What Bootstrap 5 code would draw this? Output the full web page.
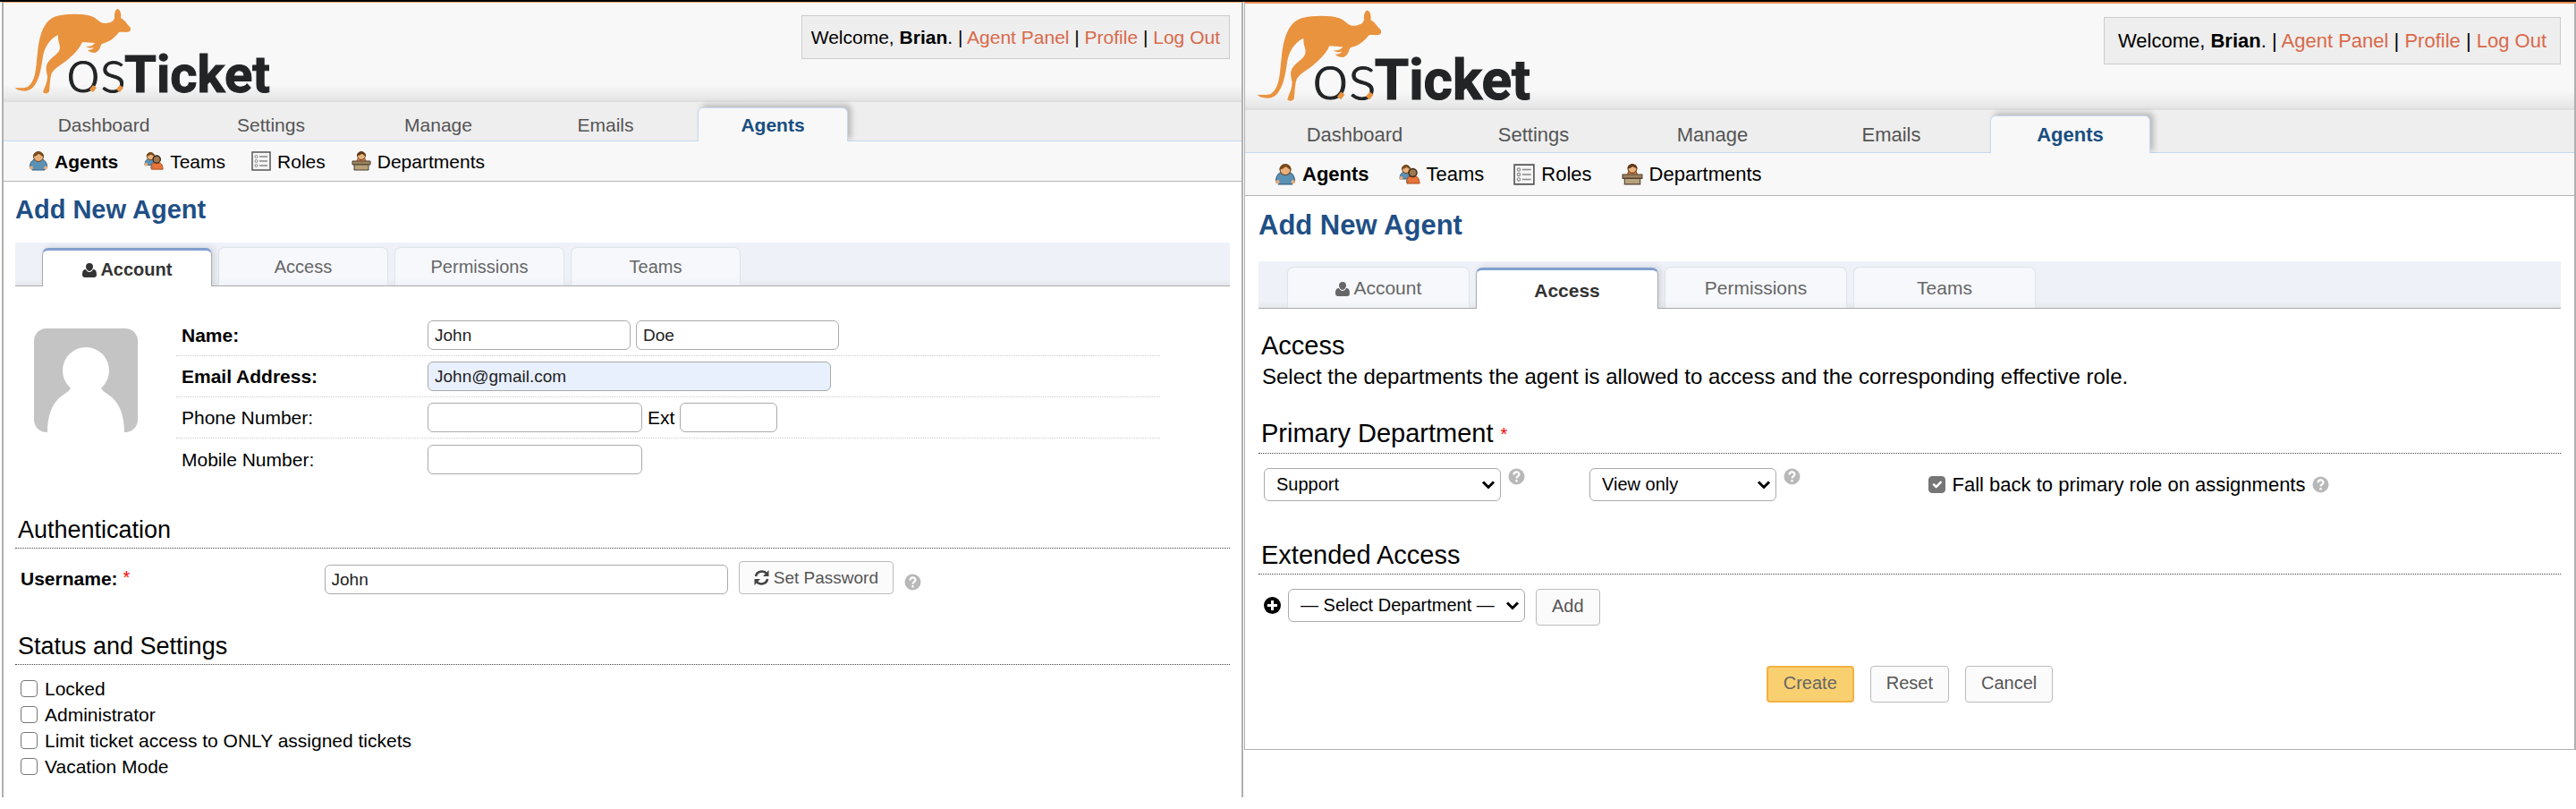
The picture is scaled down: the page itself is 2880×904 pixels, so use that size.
<!DOCTYPE html>
<html lang="en">
<head>
<meta charset="utf-8">
<meta name="viewport" content="width=device-width, initial-scale=1">
<title>osTicket :: Add New Agent</title>
<link rel="stylesheet" href="https://cdn.jsdelivr.net/npm/bootstrap@5.3.0/dist/css/bootstrap.min.css">
<script src="https://cdn.jsdelivr.net/npm/bootstrap@5.3.0/dist/js/bootstrap.bundle.min.js"></script>
<style>
  body { font-family: "Liberation Sans", Arial, sans-serif; color: #000; background: #fff; border-top: 2px solid #000; }
  a { text-decoration: none; }
  .panes { display: grid; grid-template-columns: 1390fr 1490fr; align-items: start; }

  .pane-box {
    --text: 21px; --title: 29px; --section: 27px; --tab: 20px; --ctl: 19px;
    --tabs-h: 49px; --tab-h: 43px; --tab-w: 190px; --icon: 22px;
    font-size: var(--text); line-height: 29px; border: 1px solid #b0b0b0; border-top-color: #f0a878;
  }
  .pane-first { margin-left: 2px; border-width: 1px 2px 0 2px; padding-bottom: 20px; }
  .pane-second {
    --text: 22px; --title: 31px; --section: 29px; --tab: 21px; --ctl: 20px;
    --tabs-h: 53px; --tab-h: 46px; --tab-w: 204px; --icon: 24px;
    margin-left: 1px; border-top: 2px solid #ea8a58; border-right-width: 2px; padding-bottom: 52px;
  }

  .brand-bar { height: 111px; padding: 0 13px 0 12px; background: linear-gradient(#f8f8f8 82%, #e8e8e8 96%, #dcdcdc); }
  .pane-second .brand-bar { height: 119px; padding: 0 15px 0 13px; }
  .brand-logo { height: 111px; width: 298px; display: block; }
  .pane-second .brand-logo { height: 119px; width: 319px; }
  .user-box { margin-top: 14px; height: 49px; padding: 0 10px; border: 1px solid #ccc; background: #eee; white-space: nowrap; }
  .pane-second .user-box { margin-top: 15px; height: 53px; padding: 0 15px; }
  .user-box a { color: #d9694a; }

  .main-nav { height: 44px; padding: 6px 28px 0; gap: 19px; background: #eee; border-bottom: 1px solid #c5d9f1; }
  .main-nav a { width: 168px; color: #555; text-align: center; line-height: 37px; border: 1px solid transparent; border-bottom: 0; border-radius: 6px 6px 0 0; }
  .pane-second .main-nav { height: 48px; gap: 21px; padding: 6px 33px 0; }
  .pane-second .main-nav a { width: 179px; line-height: 41px; }
  .main-nav a.active { margin-bottom: -1px; color: #184e81; font-weight: bold; background: #f8f8f8; border-color: #c5d9f1; box-shadow: 4px -3px 6px rgba(0,0,0,.22); clip-path: inset(-10px -12px 0 -2px); }

  .sub-nav { height: 45px; padding: 0 28px; gap: 29px; background: #f8f8f8; border-bottom: 1px solid #b4b4b4; }
  .pane-second .sub-nav { height: 48px; gap: 33px; padding: 0 33px; }
  .sub-nav a { color: #000; display: flex; align-items: center; gap: 7px; }
  .sub-nav svg { width: var(--icon); height: var(--icon); }

  .page-body { padding: 0 13px; }
  .pane-second .page-body { padding: 0 15px; }
  .page-title { font-size: var(--title); font-weight: bold; line-height: 36px; color: #1f4f86; margin: 13px 0 19px; }
  .pane-second .page-title { margin: 15px 0 22px; }

  .form-tabs { height: var(--tabs-h); padding: 0 30px; gap: 7px; align-items: flex-end; background: linear-gradient(#eef2f8 85%, #e4e8ec); border-bottom: 1px solid #aaa; }
  .pane-second .form-tabs { padding: 0 32px; }
  .form-tabs a { width: var(--tab-w); height: var(--tab-h); line-height: var(--tab-h); font-size: var(--tab); color: #666; text-align: center; background: linear-gradient(#f6f8fc 80%, #eff2f6); border: 1px solid #dfe4e8; border-bottom: 0; border-radius: 7px 7px 0 0; }
  .form-tabs a.active { margin-bottom: -1px; color: #333; font-weight: bold; background: #fff; border: 1px solid #aaa; border-top: 3px solid #7f9fd0; border-bottom: 0; box-shadow: 3px -1px 7px rgba(0,0,0,.12); clip-path: inset(-8px -10px 0 -2px); }
  .form-tabs svg { width: 16px; height: 16px; vertical-align: -2px; }

  .section-title { font-size: var(--section); font-weight: normal; line-height: 32px; margin: 40px 0 0; padding: 0 3px 4px; border-bottom: 1px dotted #444; }
  .pane-first .two-col + .section-title { margin-top: 42px; }
  .pane-second .section-title { line-height: 36px; margin-top: 42px; padding-bottom: 3px; }
  .pane-second .intro-title { margin-top: 23px; }
  .pane-second .primary-title { margin-top: 28px; }
  .intro-text { font-size: 24px; line-height: 34px; }
  .need { color: #f00; font-weight: normal; font-size: 20px; vertical-align: 2px; }

  .avatar-pic { width: 116px; height: 116px; margin: 15px 43px 0 21px; flex: none; }
  .contact-rows { margin-right: 78px; }
  .contact-rows > div { display: grid; grid-template-columns: 25% 1fr; height: 46px; align-items: center; border-bottom: 1px dotted #ccc; }
  .contact-rows > div:last-child { border-bottom: 0; }
  .contact-rows label:first-child, .field-cell { padding-left: 6px; }

  .form-control.field-input { height: 33px; padding: 0 7px; font-size: var(--ctl); line-height: 29px; color: #222; border: 1px solid #aaa; border-radius: 6px; }
  .input-gap { gap: 6px; }
  .w-name { width: 227px; } .w-wide { width: 451px; } .w-phone { width: 240px; } .w-ext { width: 109px; }
  .form-control.filled { background: #e8f0fe; }
  .two-col { display: grid; grid-template-columns: 25% 1fr; padding-top: 14px; }
  .three-col { display: grid; grid-template-columns: 25% 26% 1fr; }

  .btn.act { font-size: var(--ctl); line-height: 29px; color: #555; background: #fbfbfb; border: 1px solid #bbb; border-radius: 4px; padding: 3px 16px; }
  .pane-second .btn.act { height: 41px; padding: 3px 17px 5px; }
  .btn.act.go { color: #666; background: #f9d070; border: 2px solid #f5b042; }
  .btn.act svg { width: 17px; height: 17px; vertical-align: -2px; }
  .btn-after { margin: 0 12px; }
  .action-row { padding-top: 45px; gap: 18px; }
  .help-link { display: inline-flex; color: #b8b8b8; }
  .help-link svg, .plus-icon { width: 19px; height: 19px; }

  .form-select.pick { height: 37px; width: 265px; padding: 0 30px 0 13px; font-size: var(--ctl); line-height: 33px; color: #000; border: 1px solid #aaa; border-radius: 6px;
    background: #fff url("data:image/svg+xml,%3Csvg xmlns='http://www.w3.org/2000/svg' viewBox='0 0 16 12'%3E%3Cpath d='M2 2.5l6 6 6-6' fill='none' stroke='%23000' stroke-width='3'/%3E%3C/svg%3E") no-repeat right 5px center / 16px 12px; }
  .form-select.pick-role { width: 209px; }
  .form-check-input.tick { width: 19px; height: 19px; margin: 0; border: 1px solid #767676; border-radius: 4px; flex: none; }
  .form-check-input.tick:checked { background-color: #767676; }
</style>
</head>
<body>
<svg class="d-none" xmlns="http://www.w3.org/2000/svg">
  <symbol id="kangaroo" viewBox="15 3 298 111">
    <path fill="#e9933f" d="M130 10c3 0 5 5 4 10 4 2 6 5 8 8 3 2 4 5 2 7-4 2-8 0-12 1-3 4-9 10-16 12-2 0-3 1-4 2-1 4-3 8-7 9-4 0-6-1-8-3 3 0 6-1 7-3-3 1-6 1-9-1 5 0 8-1 10-4-5 0-9-1-14-1-4 9-10 14-18 21-7 5-12 8-15 12-3 3-3 14-4 22-1 3-5 3-7 1 2-6 5-11 5-18-1-4-2-8-1-12 3-8 10-10 14-16 3-6-2-10-1-18-9 4-15 13-17 24-2 12-3 23-9 32-4 6-10 8-16 6-2 0-5-1-6-3 5 0 10 1 14-1 10-7 9-24 11-38C43 37 49 22 62 18c13-3 29-3 39 0 7 2 9 9 17 8 5-1 8-2 9-6 0-4 0-8 3-10z"/>
    <text x="73" y="103" font-family="Lato, sans-serif" font-weight="300" font-size="68" fill="#222426" stroke="#222426">os</text>
    <text x="138" y="103" font-family="Roboto, sans-serif" font-weight="bold" font-size="58" fill="#222426" stroke="#222426">Ticket</text>
    <path fill="#e9933f" d="M99 100l4-5 4 3-4 5zM129 100l4-5 4 3-4 5z"/>
  </symbol>
  <symbol id="agent" viewBox="0 0 22 22">
    <path d="M4 20c-3 0-3-3-2-6s3-5 6-5h6c3 0 5 2 6 5s1 6-2 6v1H4z" fill="#5b91b5" stroke="#39617d"/>
    <circle cx="3" cy="18.500" r="2" fill="#e9ae78"/><circle cx="19" cy="18.500" r="2" fill="#e9ae78"/>
    <circle cx="11" cy="6" r="5.500" fill="#e9b17c" stroke="#6a4420"/><path d="M5 6c0-7 12-7 12 0-3 0-4-3-6-3-2 2-4 3-6 3z" fill="#7a4a1c"/>
  </symbol>
  <symbol id="team" viewBox="0 0 24 22">
    <path d="M1 16c0-5 2-8 6-8h4c3 0 4 2 4 8z" fill="#5b91b5" stroke="#39617d"/><circle cx="2.500" cy="15" r="2" fill="#e9ae78"/>
    <circle cx="8" cy="5" r="4.500" fill="#e9b17c" stroke="#6a4420"/><path d="M3 5c0-6 10-6 10 0-2 0-3-2-5-2-1 1-3 2-5 2z" fill="#7a4a1c"/>
    <path d="M9 21c-1-5 1-8 4-8h5c3 0 5 3 5 8z" fill="#e8743b" stroke="#a84818"/><circle cx="15.500" cy="9" r="4.500" fill="#a07850" stroke="#3d2a18" stroke-width="1.500"/><circle cx="9.500" cy="19" r="1.500" fill="#a07850"/>
  </symbol>
  <symbol id="roles" viewBox="0 0 22 22">
    <path d="M1 1h20v20H1z" fill="#f5f5f5" stroke="#555" stroke-width="1.500"/>
    <path d="M9 6h9M9 11h9M9 16h9" stroke="#888" stroke-width="1.500"/><g fill="none" stroke="#888"><circle cx="5.500" cy="6" r="1.500"/><circle cx="5.500" cy="11" r="1.500"/><circle cx="5.500" cy="16" r="1.500"/></g>
  </symbol>
  <symbol id="dept" viewBox="0 0 22 22">
    <path d="M6 12c0-4 2-5 5-5s5 1 5 5z" fill="#e88a4a" stroke="#8a4c20"/><circle cx="11" cy="5" r="4.500" fill="#e9b17c" stroke="#6a4420"/><path d="M6 5c0-6 10-6 10 0-2 0-3-2-5-2-1 1-3 2-5 2z" fill="#5c3a1a"/>
    <path d="M1 11h20v4H1z" fill="#9c8460" stroke="#4d4030"/><path d="M3 15h16v6H3z" fill="#b8a27c" stroke="#4d4030"/>
  </symbol>
  <symbol id="person" viewBox="0 0 16 16"><path fill="currentColor" d="M8 0c3 0 4 2 4 4s-2 5-4 5-4-3-4-5 1-4 4-4zM4 7c1 2 2 3 4 3s3-1 4-3c3 0 4 2 4 6 0 2-1 3-3 3H3c-2 0-3-1-3-3 0-4 1-6 4-6z"/></symbol>
  <symbol id="help" viewBox="0 0 19 19"><circle cx="9.500" cy="9.500" r="9" fill="currentColor"/><path d="M6.500 7.500c0-4 6-4 6-.5 0 2.200-3 2-3 4.500M9.500 13v2.400" fill="none" stroke="#fff" stroke-width="2.200"/></symbol>
  <symbol id="plus" viewBox="0 0 19 19"><circle cx="9.500" cy="9.500" r="9.500"/><path d="M9.500 4v11M4 9.500h11" stroke="#fff" stroke-width="3"/></symbol>
  <symbol id="refresh" viewBox="0 0 17 17"><g fill="none" stroke="#444" stroke-width="2.600"><path d="M2 7c1-6 9-7 12-3M15 10c-1 6-9 7-12 3"/></g><path fill="#444" d="M16.500 0v7H10zM.500 17v-7H7z"/></symbol>
</svg>

<div class="panes">
  <section class="pane-box pane-first">
    <header class="brand-bar d-flex justify-content-between">
      <a href="#" aria-label="osTicket"><svg class="brand-logo" role="img"><use href="#kangaroo"/></svg></a>
      <div class="user-box d-flex align-items-center"><span>Welcome, <b>Brian</b>. | <a href="#">Agent Panel</a> | <a href="#">Profile</a> | <a href="#">Log Out</a></span></div>
    </header>
    <nav class="main-nav d-flex"><a href="#">Dashboard</a><a href="#">Settings</a><a href="#">Manage</a><a href="#">Emails</a><a href="#" class="active">Agents</a></nav>
    <nav class="sub-nav d-flex">
      <a href="#" class="fw-bold"><svg><use href="#agent"/></svg>Agents</a>
      <a href="#"><svg><use href="#team"/></svg>Teams</a>
      <a href="#"><svg><use href="#roles"/></svg>Roles</a>
      <a href="#"><svg><use href="#dept"/></svg>Departments</a>
    </nav>
    <form class="page-body">
      <h1 class="page-title">Add New Agent</h1>
      <nav class="form-tabs d-flex"><a href="#" class="active"><svg><use href="#person"/></svg> Account</a><a href="#">Access</a><a href="#">Permissions</a><a href="#">Teams</a></nav>

      <div class="d-flex align-items-start pt-2 mt-4">
        <svg class="avatar-pic" viewBox="0 0 116 116" role="img" aria-label="Avatar">
          <rect width="116" height="116" rx="14" fill="#c4c4c4"/>
          <ellipse cx="58" cy="47" rx="26" ry="26" fill="#fff"/><path d="M42 60h32c0 8 3 10 9 14 13 8 18 24 18 42H15c0-18 5-34 18-42 6-4 9-6 9-14z" fill="#fff"/>
        </svg>
        <div class="contact-rows flex-grow-1">
          <div><label class="fw-bold" for="first">Name:</label><span class="field-cell d-flex input-gap"><input id="first" class="form-control field-input w-name" value="John"><input aria-label="Last name" class="form-control field-input w-name" value="Doe"></span></div>
          <div><label class="fw-bold" for="mail">Email Address:</label><span class="field-cell"><input id="mail" type="email" class="form-control field-input w-wide filled" value="John@gmail.com"></span></div>
          <div><label for="phone">Phone Number:</label><span class="field-cell d-flex align-items-center input-gap"><input id="phone" type="tel" class="form-control field-input w-phone"><label for="ext">Ext</label><input id="ext" class="form-control field-input w-ext"></span></div>
          <div><label for="mobile">Mobile Number:</label><span class="field-cell"><input id="mobile" type="tel" class="form-control field-input w-phone"></span></div>
        </div>
      </div>

      <h2 class="section-title">Authentication</h2>
      <div class="two-col">
        <label class="fw-bold field-cell pt-1" for="user">Username: <span class="need">*</span></label>
        <div class="field-cell d-flex align-items-end">
          <input id="user" class="form-control field-input w-wide" value="John">
          <button type="button" class="btn act btn-after"><svg><use href="#refresh"/></svg> Set Password</button>
          <a href="#" class="help-link pb-1" aria-label="Help"><svg><use href="#help"/></svg></a>
        </div>
      </div>

      <h2 class="section-title">Status and Settings</h2>
      <div class="pt-2 mt-1 field-cell">
        <label class="d-flex align-items-center gap-2"><input type="checkbox" class="form-check-input tick"> Locked</label>
        <label class="d-flex align-items-center gap-2"><input type="checkbox" class="form-check-input tick"> Administrator</label>
        <label class="d-flex align-items-center gap-2"><input type="checkbox" class="form-check-input tick"> Limit ticket access to ONLY assigned tickets</label>
        <label class="d-flex align-items-center gap-2"><input type="checkbox" class="form-check-input tick"> Vacation Mode</label>
      </div>
    </form>
  </section>

  <section class="pane-box pane-second">
    <header class="brand-bar d-flex justify-content-between">
      <a href="#" aria-label="osTicket"><svg class="brand-logo" role="img"><use href="#kangaroo"/></svg></a>
      <div class="user-box d-flex align-items-center"><span>Welcome, <b>Brian</b>. | <a href="#">Agent Panel</a> | <a href="#">Profile</a> | <a href="#">Log Out</a></span></div>
    </header>
    <nav class="main-nav d-flex"><a href="#">Dashboard</a><a href="#">Settings</a><a href="#">Manage</a><a href="#">Emails</a><a href="#" class="active">Agents</a></nav>
    <nav class="sub-nav d-flex">
      <a href="#" class="fw-bold"><svg><use href="#agent"/></svg>Agents</a>
      <a href="#"><svg><use href="#team"/></svg>Teams</a>
      <a href="#"><svg><use href="#roles"/></svg>Roles</a>
      <a href="#"><svg><use href="#dept"/></svg>Departments</a>
    </nav>
    <form class="page-body">
      <h1 class="page-title">Add New Agent</h1>
      <nav class="form-tabs d-flex"><a href="#"><svg><use href="#person"/></svg> Account</a><a href="#" class="active">Access</a><a href="#">Permissions</a><a href="#">Teams</a></nav>

      <h2 class="section-title intro-title border-0 pb-0">Access</h2>
      <p class="intro-text px-1 mb-0">Select the departments the agent is allowed to access and the corresponding effective role.</p>

      <h2 class="section-title primary-title">Primary Department <span class="need">*</span></h2>
      <div class="three-col pt-3">
        <div class="field-cell d-flex align-items-start gap-2"><select class="form-select pick" aria-label="Primary department"><option>Support</option></select><a href="#" class="help-link" aria-label="Help"><svg><use href="#help"/></svg></a></div>
        <div class="field-cell d-flex align-items-start gap-2"><select class="form-select pick pick-role" aria-label="Primary role"><option>View only</option></select><a href="#" class="help-link" aria-label="Help"><svg><use href="#help"/></svg></a></div>
        <div class="field-cell d-flex align-items-center gap-2"><input id="fall" type="checkbox" class="form-check-input tick" checked><label for="fall">Fall back to primary role on assignments</label><a href="#" class="help-link" aria-label="Help"><svg><use href="#help"/></svg></a></div>
      </div>

      <h2 class="section-title">Extended Access</h2>
      <div class="d-flex align-items-start pt-3 field-cell">
        <span class="d-flex align-items-center gap-2"><svg class="plus-icon"><use href="#plus"/></svg><select class="form-select pick" aria-label="Department"><option>— Select Department —</option></select></span>
        <button type="button" class="btn act btn-after">Add</button>
      </div>

      <div class="action-row d-flex justify-content-center">
        <button type="submit" class="btn act go">Create</button>
        <button type="reset" class="btn act">Reset</button>
        <button type="button" class="btn act">Cancel</button>
      </div>
    </form>
  </section>
</div>
</body>
</html>
